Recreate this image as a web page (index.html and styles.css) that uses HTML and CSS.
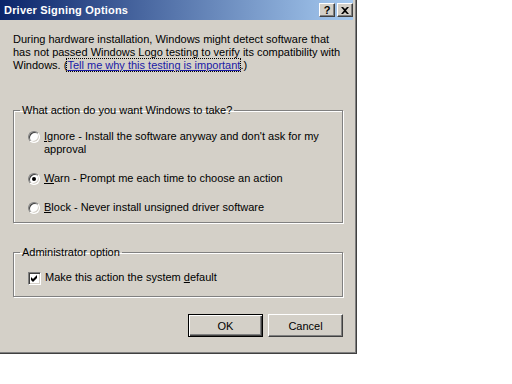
FILE: index.html
```html
<!DOCTYPE html>
<html lang="en">
<head>
    <meta charset="UTF-8">
    <title>Driver Signing Options</title>
    <link rel="stylesheet" href="styles.css">
</head>
<body>

    <!-- Dialog window -->
    <div class="window">
        <div class="title-bar">
            <span class="title">Driver Signing Options</span>
            <div class="title-buttons">
                <span class="title-button help">?</span>
                <span class="title-button close">
                    <svg width="8" height="7" viewBox="0 0 8 7">
                        <path d="M0 0 L2 0 L4 2 L6 0 L8 0 L5 3.5 L8 7 L6 7 L4 5 L2 7 L0 7 L3 3.5 Z" fill="#000"/>
                    </svg>
                </span>
            </div>
        </div>

        <div class="content">
            <p class="intro">
                During hardware installation, Windows might detect software that<br>
                has not passed Windows Logo testing to verify its compatibility with<br>
                Windows. (<a href="#" class="link">Tell me why this testing is important</a>.)
            </p>

            <!-- Action group -->
            <fieldset class="group actions">
                <legend>What action do you want Windows to take?</legend>
                <label class="option">
                    <span class="radio"></span>
                    <span class="option-text"><u>I</u>gnore - Install the software anyway and don't ask for my<br>approval</span>
                </label>
                <label class="option">
                    <span class="radio checked"></span>
                    <span class="option-text"><u>W</u>arn - Prompt me each time to choose an action</span>
                </label>
                <label class="option">
                    <span class="radio"></span>
                    <span class="option-text"><u>B</u>lock - Never install unsigned driver software</span>
                </label>
            </fieldset>

            <!-- Administrator group -->
            <fieldset class="group admin">
                <legend>Administrator option</legend>
                <label class="option">
                    <span class="checkbox">
                        <svg width="11" height="11" viewBox="0 0 11 11">
                            <path d="M2 4 L4 6 L8 2 L8 5 L4 9 L2 7 Z" fill="#000"/>
                        </svg>
                    </span>
                    <span class="option-text">Make this action the system <u>d</u>efault</span>
                </label>
            </fieldset>

            <!-- Buttons -->
            <div class="buttons">
                <button class="btn default">OK</button>
                <button class="btn">Cancel</button>
            </div>
        </div>
    </div>

</body>
</html>
```

FILE: styles.css
```css
/* Reset */
body, html {
    margin: 0;
    padding: 0;
    background: #fff;
    font-family: 'Liberation Sans', Arial, sans-serif;
    font-size: 11px;
    line-height: 13px;
    color: #000;
}

/* Dialog frame */
.window {
    width: 357px;
    height: 354px;
    box-sizing: border-box;
    background: #d4d0c8;
    border-right: 1px solid #404040;
    border-bottom: 1px solid #404040;
    box-shadow: inset -1px -1px 0 #808080;
    padding-right: 3px;
}

/* Title bar */
.title-bar {
    height: 20px;
    display: flex;
    align-items: center;
    justify-content: space-between;
    background: linear-gradient(to right, #0a246a, #a6caf0);
    padding: 0 0 0 4px;
}

.title {
    color: #fff;
    font-weight: bold;
    font-size: 11px;
    letter-spacing: 0.2px;
}

.title-buttons {
    display: flex;
    gap: 2px;
}

.title-button {
    width: 16px;
    height: 14px;
    box-sizing: border-box;
    background: #d4d0c8;
    border: 1px solid;
    border-color: #fff #404040 #404040 #fff;
    box-shadow: inset -1px -1px 0 #808080;
    display: flex;
    align-items: center;
    justify-content: center;
    font-weight: bold;
    font-size: 11px;
    line-height: 12px;
}

/* Content */
.content {
    padding: 0 10px 0 13px;
}

.intro {
    margin: 13px 0 0 0;
    white-space: nowrap;
}

.link {
    color: #1a1aa6;
    text-decoration: underline;
    outline: 1px dotted #000;
}

/* Group boxes */
.group {
    margin: 0;
    border: 1px solid #808080;
    box-shadow: 1px 1px 0 #fff, inset 1px 1px 0 #fff;
    padding: 0 10px 0 14px;
}

.group legend {
    padding: 0 2px;
    margin-left: -8px;
}

.actions {
    margin-top: 32px;
    padding-top: 13px;
    padding-bottom: 8px;
    display: flex;
    flex-direction: column;
    gap: 16px;
}

.admin {
    margin-top: 23px;
    padding-top: 12px;
    padding-bottom: 11px;
}

.option {
    display: flex;
    align-items: flex-start;
    gap: 4px;
}

.radio {
    width: 12px;
    height: 12px;
    box-sizing: border-box;
    border-radius: 50%;
    border: 1px solid;
    border-color: #808080 #fff #fff #808080;
    box-shadow: inset 1px 1px 0 #404040, inset -1px -1px 0 #d4d0c8;
    background: #fff;
    margin-top: 1px;
    flex-shrink: 0;
    display: flex;
    align-items: center;
    justify-content: center;
}

.radio.checked::after {
    content: "";
    width: 4px;
    height: 4px;
    border-radius: 50%;
    background: #000;
}

.checkbox {
    width: 13px;
    height: 13px;
    box-sizing: border-box;
    border: 1px solid;
    border-color: #808080 #fff #fff #808080;
    box-shadow: inset 1px 1px 0 #404040, inset -1px -1px 0 #d4d0c8;
    background: #fff;
    flex-shrink: 0;
    margin-top: 1px;
}

.checkbox svg {
    display: block;
}

/* Buttons */
.buttons {
    display: flex;
    justify-content: flex-end;
    gap: 5px;
    margin-top: 17px;
}

.btn {
    width: 75px;
    height: 23px;
    box-sizing: border-box;
    background: #d4d0c8;
    font-family: 'Liberation Sans', Arial, sans-serif;
    font-size: 11px;
    color: #000;
    border: 1px solid;
    border-color: #fff #404040 #404040 #fff;
    box-shadow: inset -1px -1px 0 #808080;
    padding: 0;
}

.btn.default {
    border: 1px solid #000;
    box-shadow: inset 1px 1px 0 #fff, inset -1px -1px 0 #404040, inset -2px -2px 0 #808080;
}
```
